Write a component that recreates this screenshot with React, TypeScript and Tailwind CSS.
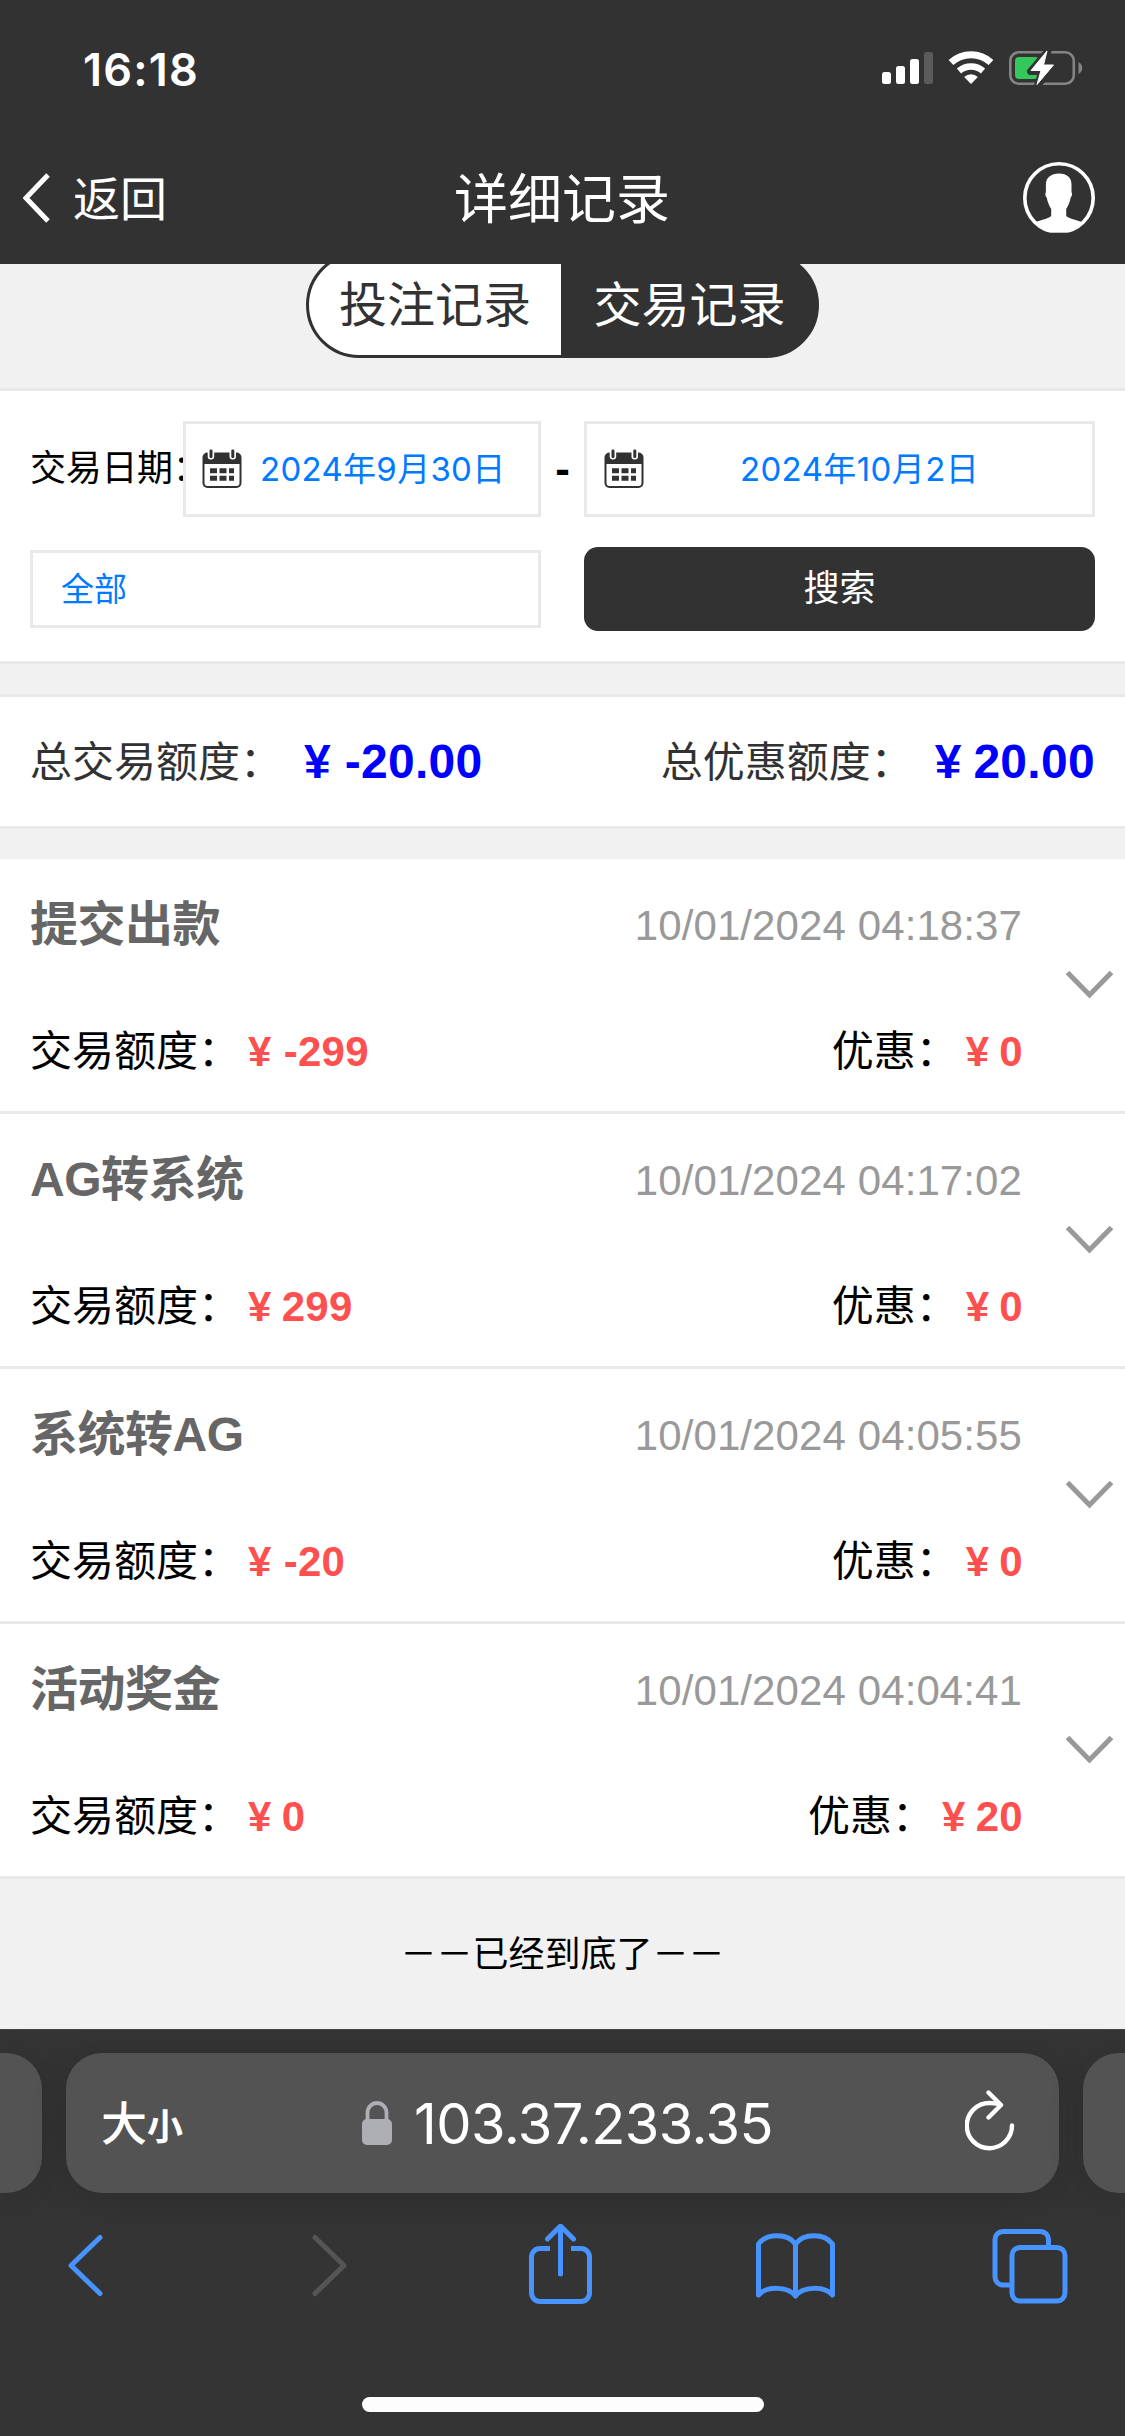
import React from 'react';

const records = [
    { title: '提交出款', time: '10/01/2024 04:18:37', amount: '-299', bonus: '0' },
    { title: 'AG转系统', time: '10/01/2024 04:17:02', amount: '299', bonus: '0' },
    { title: '系统转AG', time: '10/01/2024 04:05:55', amount: '-20', bonus: '0' },
    { title: '活动奖金', time: '10/01/2024 04:04:41', amount: '0', bonus: '20' },
];

const StatusIcons = () => (
    <svg className="w-[202px] h-[36px]" viewBox="881 51 202 36" fill="none">
        <rect x="882" y="73" width="9" height="12" rx="2.5" fill="#fff" />
        <rect x="896" y="67" width="9" height="18" rx="2.5" fill="#fff" />
        <rect x="910" y="60" width="9" height="25" rx="2.5" fill="#fff" />
        <rect x="924" y="53" width="9" height="32" rx="2.5" fill="#5b5b5b" />
        <path d="M951 63.5a29.500 29.500 0 0 1 40 0" stroke="#fff" strokeWidth="7" />
        <path d="M959 72a18.500 18.500 0 0 1 24 0" stroke="#fff" strokeWidth="6.5" />
        <path d="M971 85l-6.8-7a10 10 0 0 1 13.6 0z" fill="#fff" />
        <rect x="1010.3" y="53.3" width="63.5" height="31.4" rx="8.5" stroke="#848484" strokeWidth="2.6" />
        <path d="M1078.5 63c5 2.500 5 9.500 0 12z" fill="#848484" />
        <rect x="1015" y="58" width="24" height="22" rx="4" fill="#34c759" />
        <path
            d="M1048 52l-17.500 20.500h11.500l-4.500 14 16.500-20h-11z"
            fill="#fff"
            stroke="#323232"
            strokeWidth="7"
            strokeLinejoin="round"
        />
        <path d="M1047 52l-16 19.500h10l-4 14 16.500-19.500h-10z" fill="#fff" stroke="#fff" strokeWidth="1" strokeLinejoin="round" />
    </svg>
);

const Avatar = () => (
    <svg className="w-[72px] h-[72px]" viewBox="0 0 72 72" fill="none">
        <circle cx="36" cy="36" r="34.200" stroke="#fff" strokeWidth="3.6" />
        <path
            d="M36 11.500c8 0 12.500 4 12.500 11v8c1 .5.600 4-.8 5-.8 5-2.800 8.500-4.500 11.500v7c3 3 9.500 3.500 15.500 6-5.500 7.500-13 11.500-23 11.500s-17.500-4-23-11.500c6-2.500 12.500-3 15.500-6v-7c-1.700-3-3.700-6.500-4.500-11.500-1.400-1-1.800-4.500-.8-5v-8c0-7 5.100-11 13.100-11z"
            fill="#fff"
        />
        <rect x="20" y="70.700" width="32" height="2" fill="#323232" />
    </svg>
);

const CalendarIcon = () => (
    <svg className="w-10 h-10 shrink-0" viewBox="0 0 40 40" fill="none">
        <rect x="0.500" y="3.500" width="39" height="35.500" rx="5" fill="#323232" />
        <path d="M2.500 15h35v19a3 3 0 0 1-3 3h-29a3 3 0 0 1-3-3z" fill="#fff" />
        <rect x="5.700" y="0" width="6.500" height="10.500" rx="3" fill="#fff" />
        <rect x="27.500" y="0" width="6.500" height="10.500" rx="3" fill="#fff" />
        <rect x="7.500" y="0.500" width="3" height="8.500" rx="1.200" fill="#323232" />
        <rect x="29.300" y="0.500" width="3" height="8.500" rx="1.200" fill="#323232" />
        <path
            d="M8 19.200h7v5H8zM17.500 19.200h7v5h-7zM27 19.200h5v5h-5zM8 26.700h7v5H8zM17.500 26.700h7v5h-7zM27 26.700h5v5h-5z"
            fill="#323232"
        />
    </svg>
);

const Header = () => (
    <header className="relative z-10 h-[264px] bg-[#323232] text-white">
        <div className="h-[136px] pl-[83px] pr-[42px] flex items-center justify-between">
            <span className="font-[Inter,sans-serif] font-semibold text-[45px] leading-none tracking-[1.2px] mt-[2px]">16:18</span>
            <StatusIcons />
        </div>
        <div className="h-[124px] pl-[23px] pr-[30px] flex items-center justify-between">
            <div className="flex-1 flex items-center gap-[22px]">
                <svg className="w-[28px] h-[50px]" viewBox="0 0 28 50" fill="none">
                    <path d="M25 2L3 25l22 23" stroke="#fff" strokeWidth="5" />
                </svg>
                <span className="mt-[3px] text-[47px] leading-none">返回</span>
            </div>
            <h1 className="ml-[6px] mt-[3px] text-[54px] leading-none text-center whitespace-nowrap">详细记录</h1>
            <div className="flex-1 flex justify-end">
                <Avatar />
            </div>
        </div>
    </header>
);

const Tabs = () => (
    <div className="h-[124px] flex justify-center">
        <div className="-mt-3 h-[106px] w-[513px] rounded-full border-[3px] border-[#323232] bg-[#323232] overflow-hidden flex text-[48px] leading-[102px] text-center">
            <button className="w-[252px] bg-white text-[#323232]">投注记录</button>
            <button className="flex-1 pl-[2px] text-white">交易记录</button>
        </div>
    </div>
);

const Filters = () => (
    <section className="h-[276px] bg-white border-y-[3px] border-[#e9e9e9] px-[30px] pt-[30px]">
        <div className="h-24 flex items-center">
            <div className="w-[153px] shrink-0 overflow-hidden whitespace-nowrap text-[36px] tracking-[-0.3px] text-black">交易日期：</div>
            <div className="w-[358px] h-24 border-[3px] border-[#e9e9e9] pl-4 flex items-center text-[#007aff] text-[33px]">
                <CalendarIcon />
                <span className="mt-[2px] pl-[18px] font-[Inter,'Noto_Sans_CJK_SC',sans-serif] tracking-[0.3px] whitespace-nowrap">2024年9月30日</span>
            </div>
            <div className="w-[43px] text-center text-[44px] leading-none text-black font-bold">-</div>
            <div className="w-[511px] h-24 border-[3px] border-[#e9e9e9] pl-[17px] flex items-center text-[#007aff] text-[33px]">
                <CalendarIcon />
                <span className="mt-[2px] flex-1 text-center pr-[17px] font-[Inter,'Noto_Sans_CJK_SC',sans-serif] tracking-[0.4px]">2024年10月2日</span>
            </div>
        </div>
        <div className="mt-[30px] flex items-center justify-between h-[84px]">
            <div className="w-[511px] h-[78px] border-[3px] border-[#e9e9e9] pl-7 pt-[2px] flex items-center text-[33px] text-[#007aff]">全部</div>
            <button className="w-[511px] h-[84px] rounded-[14px] bg-[#323232] text-white text-[36px]">搜索</button>
        </div>
    </section>
);

// a minus sign keeps the full gap after the currency mark, plain digits sit closer
const Money = ({ value }: { value: string }) => (
    <b className={value.startsWith('-') ? 'tracking-[0.3px]' : 'tracking-[0.3px] [word-spacing:-2px]'}>¥ {value}</b>
);

const Summary = () => (
    <section className="mt-[30px] h-[135px] bg-white border-y-[3px] border-[#e9e9e9] px-[30px] flex items-center justify-between text-[42px] leading-none text-[#323232]">
        <div className="flex items-center">
            <span className="w-[274px] pt-[2px]">总交易额度：</span>
            <span className="text-[48px] text-[#0000ff]">
                <Money value="-20.00" />
            </span>
        </div>
        <div className="flex items-center">
            <span className="w-[274px] pt-[2px]">总优惠额度：</span>
            <span className="text-[48px] text-[#0000ff]">
                <Money value="20.00" />
            </span>
        </div>
    </section>
);

const RecordRow = ({ title, time, amount, bonus }: (typeof records)[number]) => (
    <li className="h-[255px] border-b-[3px] border-[#e9e9e9] pl-[30px] pr-[11px] flex items-center">
        <div className="flex-1 h-full text-[42px] leading-none">
            <div className="h-[131px] flex items-center justify-between">
                <span className="text-[48px] font-bold tracking-[-0.5px] text-[#666]">{title}</span>
                <span className="pt-[2px] pr-px text-[#999] tracking-[0.1px]">{time}</span>
            </div>
            <div className="h-[124px] flex items-center justify-between text-black">
                <div className="flex items-center">
                    <span className="w-[218px]">交易额度：</span>
                    <span className="text-[#ff5050]">
                        <Money value={amount} />
                    </span>
                </div>
                <div className="flex items-center">
                    <span className="w-[134px]">优惠：</span>
                    <span className="text-[#ff5050]">
                        <Money value={bonus} />
                    </span>
                </div>
            </div>
        </div>
        <svg className="ml-[42px] -mt-px w-[49px] h-[29px]" viewBox="0 0 49 29" fill="none">
            <path d="M2.500 2.500l22 22.500 22-22.500" stroke="#999" strokeWidth="5" />
        </svg>
    </li>
);

const AddressBar = () => (
    <div className="mt-[23px] h-[140px] flex gap-6 text-white">
        <div className="w-[42px] rounded-r-[36px] bg-[#535353] shadow-[0_6px_36px_rgba(0,0,0,0.14)]" />
        <div className="w-[993px] rounded-[36px] bg-[#535353] shadow-[0_6px_36px_rgba(0,0,0,0.14)] pl-[35px] pr-[44px] flex items-center">
            <div className="w-[83px] pt-[2px] flex items-baseline leading-none">
                <span className="text-[46px] font-medium">大</span>
                <span className="text-[36px] font-bold">小</span>
            </div>
            <svg className="ml-[178px] w-[30px] h-[44px]" viewBox="0 0 30 44" fill="none">
                <path d="M5.500 20v-8.500a9.500 9.500 0 0 1 19 0V20" stroke="#aeaeb5" strokeWidth="3.800" />
                <rect x="0" y="18" width="30" height="26" rx="5" fill="#aeaeb5" />
            </svg>
            <span className="ml-[22px] mt-[2px] font-[Inter,sans-serif] text-[56px] leading-none tracking-[-0.6px]">103.37.233.35</span>
            <svg
                className="ml-auto -mt-1 w-[50px] h-[62px]"
                viewBox="0 0 50 62"
                fill="none"
                stroke="#fff"
                strokeWidth="4.400"
                strokeLinecap="round"
                strokeLinejoin="round"
            >
                <path d="M47 35.500A22.600 22.600 0 1 1 24.400 13q6 0 10.500 1.500" />
                <path d="M23.500 2.500L36 15 23.500 27.500" />
            </svg>
        </div>
        <div className="w-[42px] rounded-l-[36px] bg-[#535353] shadow-[0_6px_36px_rgba(0,0,0,0.14)]" />
    </div>
);

const Toolbar = () => (
    <nav className="mt-[31px] h-[80px]">
        <svg
            className="w-[1125px] h-[80px]"
            viewBox="0 2224 1125 80"
            fill="none"
            stroke="#4793ff"
            strokeWidth="5"
            strokeLinecap="round"
            strokeLinejoin="round"
        >
            <path d="M100 2237.500L71 2265.500l29 28" />
            <path d="M315 2237.500l29 28-29 28" stroke="#555" />
            <path
                d="M550 2248.500h-10a8.500 8.500 0 0 0-8.500 8.500v36a8.500 8.500 0 0 0 8.500 8.500h41a8.500 8.500 0 0 0 8.500-8.500v-36a8.500 8.500 0 0 0-8.500-8.500h-10"
                strokeLinecap="butt"
            />
            <path d="M560.500 2274v-47M547.500 2239l13-13 13 13" />
            <path d="M795.500 2244c-8-11-29-11-37 0v51c8-9 29-9 37 1 8-10 29-10 37-1v-51c-8-11-29-11-37 0zM795.500 2244v52" />
            <path d="M1010 2285h-7a8 8 0 0 1-8-8v-37.500a8 8 0 0 1 8-8h37.500a8 8 0 0 1 8 8v8" strokeLinecap="butt" />
            <rect x="1012" y="2247.500" width="53" height="53.500" rx="8" />
        </svg>
    </nav>
);

export default function App() {
    return (
        <div className="w-[1125px] h-[2436px] bg-[#f1f1f1] overflow-hidden flex flex-col font-['Liberation_Sans','Noto_Sans_CJK_SC',sans-serif]">
            <Header />
            <Tabs />
            <Filters />
            <Summary />
            <ul className="mt-[30px] bg-white">
                {records.map((record) => (
                    <RecordRow key={record.time} {...record} />
                ))}
            </ul>
            <p className="h-[150px] leading-[152px] text-center text-[36px] text-black">－－已经到底了－－</p>
            <footer className="h-[407px] bg-[#343434] border-t border-[#454545] overflow-hidden">
                <AddressBar />
                <Toolbar />
                <div className="mt-[93px] mx-auto w-[402px] h-[15px] rounded-full bg-[#fdfdfd]" />
            </footer>
        </div>
    );
}
